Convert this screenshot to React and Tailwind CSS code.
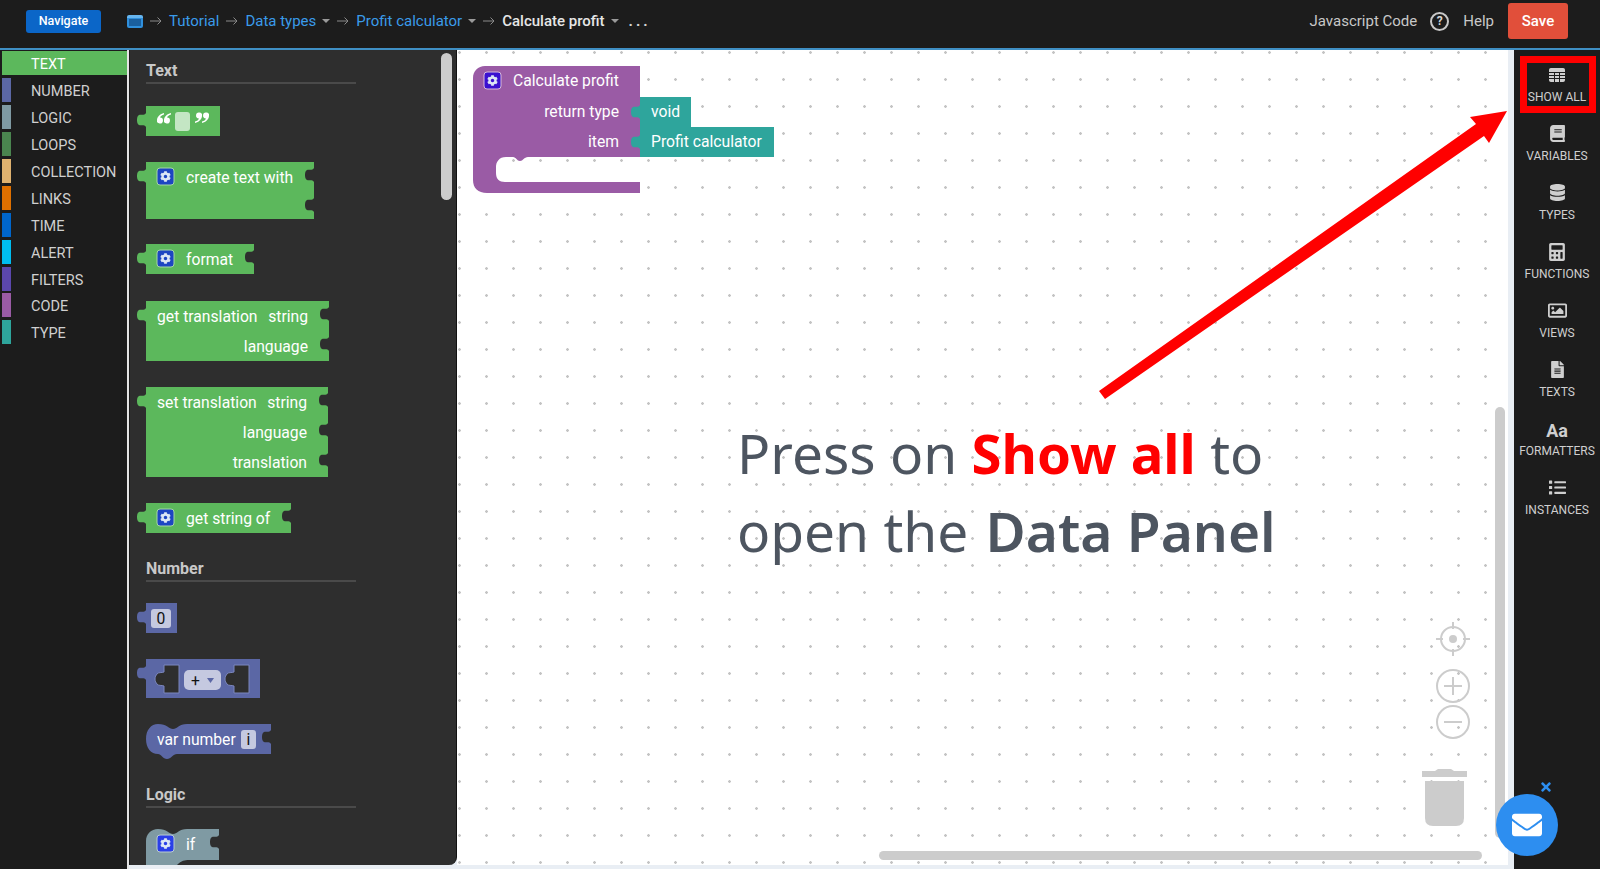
import React from "react";
import {
  FaBook,
  FaCalculator,
  FaCog,
  FaDatabase,
  FaEnvelope,
  FaFileAlt,
  FaList,
  FaRegImage,
  FaTimes,
} from "react-icons/fa";

const categories = [
  { name: "TEXT", color: "#5cb85c" },
  { name: "NUMBER", color: "#5b67a5" },
  { name: "LOGIC", color: "#7f9aa3" },
  { name: "LOOPS", color: "#4a854f" },
  { name: "COLLECTION", color: "#dfb26f" },
  { name: "LINKS", color: "#df7000" },
  { name: "TIME", color: "#0066cc" },
  { name: "ALERT", color: "#00bdf0" },
  { name: "FILTERS", color: "#5b47ad" },
  { name: "CODE", color: "#9a5ba5" },
  { name: "TYPE", color: "#2ea59c" },
];

const TableIcon = () => (
  <svg width="16" height="14" viewBox="0 0 16 14" fill="none" stroke="#cfcfcf">
    <rect x="0.5" y="0.5" width="15" height="13" rx="1" fill="#cfcfcf" />
    <path d="M 0,4.5 H 16 M 0,7.5 H 16 M 0,10.5 H 16 M 5.5,4 V 14 M 10.5,4 V 14" stroke="#1c1c1c" />
  </svg>
);

const tools = [
  { label: "SHOW ALL", icon: <TableIcon /> },
  { label: "VARIABLES", icon: <FaBook size={17} /> },
  { label: "TYPES", icon: <FaDatabase size={17} /> },
  { label: "FUNCTIONS", icon: <FaCalculator size={18} /> },
  { label: "VIEWS", icon: <FaRegImage size={19} /> },
  { label: "TEXTS", icon: <FaFileAlt size={17} /> },
  { label: "FORMATTERS", icon: <span className="relative top-[2px] text-[18px] font-bold leading-none">Aa</span> },
  { label: "INSTANCES", icon: <FaList size={17} /> },
];

// puzzle tab cut into a right edge, going down
const notch = "c -2,3 -5,1 -7,2 c -2,1 -2,4 -2,5 s 0,4 2,5 c 2,1 5,-1 7,2";
// output tab on a left edge, going up
const leftTab = "c -2,-3 -5,-1 -7,-2 c -2,-1 -2,-4 -2,-5 s 0,-4 2,-5 c 2,-1 5,1 7,-2";

function blockPath(w, h, notches = []) {
  let d = `M 9,0 H ${9 + w}`;
  notches.forEach((n) => {
    d += ` V ${n} ${notch}`;
  });
  d += ` V ${h} H 9 V 21 ${leftTab} Z`;
  return d;
}

const Gear = ({ x, y, fill = "#1d45c2", stroke = "#a5d6a5" }) => (
  <g>
    <rect x={x} y={y} width="17" height="17" rx="3" fill={fill} stroke={stroke} strokeWidth="1" />
    <FaCog x={x + 3} y={y + 3} size={11} color="#dce6f5" />
  </g>
);

const Label = ({ x, y, anchor = "start", fill = "#fff", children }) => (
  <text x={x} y={y + 1} textAnchor={anchor} fill={fill} fontFamily="Roboto, sans-serif" fontSize="15.7">
    {children}
  </text>
);

const Block = ({ w, h, notches, color = "#5cb85c", className = "", children }) => (
  <svg width={w + 10} height={h} className={`block shrink-0 ${className}`}>
    <path d={blockPath(w, h, notches)} fill={color} />
    {children}
  </svg>
);

const SectionTitle = ({ className = "", children }) => (
  <div className={`ml-[9px] w-[210px] h-[24px] shrink-0 border-b-2 border-[#4a4a4a] text-[16px] leading-[22px] font-bold text-[#c8c8c8] ${className}`}>
    {children}
  </div>
);

const Flyout = () => (
  <div className="relative w-[328px] shrink-0 h-[815px] flex flex-col pl-[7px] bg-[#2e2e2e] border-l border-[#1c1c1c] border-r border-r-[#111] rounded-br-lg overflow-hidden">
    <SectionTitle className="mt-[10px]">Text</SectionTitle>

    <Block w={74} h={30} className="mt-[22px]">
      <path d="M 27,7 C 23,8 20,11 20,14 a 3,3 0 1 0 3,-2.5 C 23.5,10 25,9 27,8.5 Z M 34,7 C 30,8 27,11 27,14 a 3,3 0 1 0 3,-2.5 C 30.5,10 32,9 34,8.5 Z" fill="#fff" />
      <rect x="38" y="6" width="15" height="19" rx="3" fill="#c4e6c4" />
      <path d="M 58,17 C 62,16 65,13 65,10 a 3,3 0 1 0 -3,2.5 C 61.5,14 60,15 58,15.5 Z M 65,17 C 69,16 72,13 72,10 a 3,3 0 1 0 -3,2.5 C 68.5,14 67,15 65,15.5 Z" fill="#fff" />
    </Block>

    <Block w={168} h={57} notches={[6, 36]} className="mt-[26px]">
      <Gear x={20} y={6} />
      <Label x={49} y={20}>create text with</Label>
    </Block>

    <Block w={108} h={30} notches={[6]} className="mt-[25px]">
      <Gear x={20} y={6} />
      <Label x={49} y={20}>format</Label>
    </Block>

    <Block w={183} h={60} notches={[6, 36]} className="mt-[27px]">
      <Label x={20} y={20}>get translation</Label>
      <Label x={171} y={20} anchor="end">string</Label>
      <Label x={171} y={50} anchor="end">language</Label>
    </Block>

    <Block w={182} h={90} notches={[6, 36, 66]} className="mt-[26px]">
      <Label x={20} y={20}>set translation</Label>
      <Label x={170} y={20} anchor="end">string</Label>
      <Label x={170} y={50} anchor="end">language</Label>
      <Label x={170} y={80} anchor="end">translation</Label>
    </Block>

    <Block w={145} h={30} notches={[6]} className="mt-[26px]">
      <Gear x={20} y={6} />
      <Label x={49} y={20}>get string of</Label>
    </Block>

    <SectionTitle className="mt-[25px]">Number</SectionTitle>

    <Block w={31} h={30} color="#5b67a5" className="mt-[21px]">
      <rect x="14" y="6" width="20" height="19" rx="3" fill="#c5c9e0" />
      <Label x={24} y={20} anchor="middle" fill="#111">0</Label>
    </Block>

    <Block w={114} h={39} color="#5b67a5" className="mt-[26px]">
      <path d="M 27,6 H 42 V 34 H 27 V 27 c -2,-1 -6,0 -7,-2 c -1,-1 -2,-3 -2,-5 s 1,-4 2,-5 c 1,-2 5,-1 7,-2 Z" fill="#2e2e2e" stroke="#7b86bd" strokeWidth="1" />
      <path d="M 97,6 H 112 V 34 H 97 V 27 c -2,-1 -6,0 -7,-2 c -1,-1 -2,-3 -2,-5 s 1,-4 2,-5 c 1,-2 5,-1 7,-2 Z" fill="#2e2e2e" stroke="#7b86bd" strokeWidth="1" />
      <rect x="47" y="11" width="37" height="20" rx="5" fill="#c5c9e0" />
      <Label x={54} y={26} fill="#111">+</Label>
      <path d="M 70,19 h 7 l -3.5,5 Z" fill="#5b67a5" />
    </Block>

    <svg width="140" height="35" className="block shrink-0 mt-[26px]">
      <path d={`M 21,0 C 30,0 32,5 36,5 C 40,5 42,0 50,0 H 134 V 6 ${notch} V 30 H 40 C 36,30 34,35 30,35 C 26,35 24,30 21,30 C 14,30 9,24 9,15 C 9,6 14,0 21,0 Z`} fill="#5b67a5" />
      <Label x={20} y={20}>var number</Label>
      <rect x="104" y="6" width="15" height="19" rx="3" fill="#c5c9e0" />
      <Label x={111.5} y={20} anchor="middle" fill="#111">i</Label>
    </svg>

    <SectionTitle className="mt-[25px]">Logic</SectionTitle>

    <svg width="90" height="60" className="block shrink-0 mt-[21px]">
      <path d={`M 21,0 C 30,0 32,5 36,5 C 40,5 42,0 50,0 H 82 V 6 ${notch} V 60 H 9 V 12 C 9,5 14,0 21,0 Z`} fill="#7f9aa3" />
      <path d="M 40,36 C 46,30 50,31 56,31 H 82 V 36 Z" fill="#2e2e2e" />
      <Gear x={20} y={6} fill="#2a3fe8" stroke="#b9cbd1" />
      <Label x={49} y={20}>if</Label>
    </svg>

    <div className="absolute left-[311px] top-[3px] w-[11px] h-[147px] rounded-full bg-[#cccccc]" />
  </div>
);

const CanvasBlocks = () => (
  <svg width="320" height="135" className="absolute left-[16px] top-[16px]">
    <path d="M 12,0 H 167 V 91 H 55 C 51,91 50,95 47,95 C 44,95 43,91 40,91 H 33 C 26,91 23,96 23,101 V 107 C 23,113 26,116 32,116 H 167 V 127 H 14 C 5,127 0,122 0,114 V 12 C 0,5 5,0 12,0 Z" fill="#9a5ba5" />
    <Gear x={11} y={6} fill="#3a10d0" stroke="#d6b9dc" />
    <Label x={40} y={19}>Calculate profit</Label>
    <Label x={146} y={50} anchor="end">return type</Label>
    <Label x={146} y={80} anchor="end">item</Label>

    <path d="M 167,31 H 218 V 61 H 167 V 53 c -2,-3 -5,-1 -7,-2 c -2,-1 -2,-4 -2,-5 s 0,-4 2,-5 c 2,-1 5,1 7,-2 Z" fill="#2ea59c" />
    <Label x={178} y={50}>void</Label>
    <path d="M 167,61 H 301 V 91 H 167 V 83 c -2,-3 -5,-1 -7,-2 c -2,-1 -2,-4 -2,-5 s 0,-4 2,-5 c 2,-1 5,1 7,-2 Z" fill="#2ea59c" />
    <Label x={178} y={80}>Profit calculator</Label>
  </svg>
);

const Controls = () => (
  <svg width="60" height="215" className="absolute left-[961px] top-[565px]" fill="none" stroke="#cccccc" strokeWidth="2">
    <circle cx="35" cy="24" r="12" />
    <path d="M 35,7 V 14 M 35,34 V 41 M 18,24 H 25 M 45,24 H 52" />
    <circle cx="35" cy="24" r="4" fill="#cccccc" stroke="none" />
    <circle cx="35" cy="71" r="16" />
    <path d="M 35,62 V 80 M 26,71 H 44" />
    <circle cx="35" cy="107" r="16" />
    <path d="M 26,107 H 44" />
    <path d="M 4,162 H 49 V 156 H 36 L 33,154 H 20 L 17,156 H 4 Z" fill="#cccccc" stroke="none" />
    <path d="M 7,166 H 46 V 203 Q 46,211 38,211 H 15 Q 7,211 7,203 Z" fill="#cccccc" stroke="none" />
  </svg>
);

const Sep = () => (
  <svg width="12" height="10" viewBox="0 0 12 10" className="mx-[7px] shrink-0" fill="none" stroke="#8a8a8a" strokeWidth="1">
    <path d="M 0,5 H 11 M 7.5,1.5 L 11,5 L 7.5,8.5" />
  </svg>
);
const Caret = () => <span className="ml-[6px] w-0 h-0 border-x-[4px] border-x-transparent border-t-[4px] border-t-[#9a9a9a]" />;

const Header = () => (
  <header className="h-[50px] shrink-0 flex items-center bg-[#1c1c1c] border-b-2 border-[#3f8fc4] pl-[26px] pr-[32px] pb-[6px] text-[15px] text-[#d6d6d6]">
    <button className="w-[75px] h-[23px] rounded-[3px] bg-[#0b66c8] text-white text-[12.5px] font-medium">Navigate</button>
    <div className="ml-[26px] w-[16px] h-[13px] rounded-[2px] bg-[#2f8fdc] border-t-[3px] border-[#66b5ef] flex items-center justify-center">
      <span className="w-[12px] h-[7px] bg-[#1a5f9e]" />
    </div>
    <Sep />
    <span className="text-[#3a9bea]">Tutorial</span>
    <Sep />
    <span className="text-[#3a9bea]">Data types</span>
    <Caret />
    <Sep />
    <span className="text-[#3a9bea]">Profit calculator</span>
    <Caret />
    <Sep />
    <span className="text-[#e6e6e6] font-medium">Calculate profit</span>
    <Caret />
    <span className="ml-[10px] tracking-[3px] font-bold">...</span>
    <span className="ml-auto text-[#c8c8c8]">Javascript Code</span>
    <span className="ml-[13px] w-[19px] h-[19px] rounded-full border-2 border-[#c8c8c8] flex items-center justify-center text-[12px] font-bold">?</span>
    <span className="ml-[14px] text-[#c8c8c8]">Help</span>
    <button className="ml-[14px] w-[60px] h-[36px] rounded-[3px] bg-[#e14f3a] text-white text-[15px] font-medium">Save</button>
  </header>
);

const Sidebar = () => (
  <aside className="w-[129px] shrink-0 bg-[#1c1c1c] pt-[1px] pl-[2px] border-r-2 border-[#e4e4e4]">
    {categories.map((c, i) => (
      <div key={c.name} className="h-[26.95px] flex items-start">
        <div
          className={`h-[24px] ${i === 0 ? "w-[125px]" : "w-[9px]"}`}
          style={{ backgroundColor: c.color }}
        >
          {i === 0 && <span className="block ml-[29px] h-[24px] leading-[27px] text-[14.5px] text-white">{c.name}</span>}
        </div>
        {i !== 0 && <span className="ml-[20px] h-[24px] leading-[27px] text-[14.5px] text-[#d0d0d0]">{c.name}</span>}
      </div>
    ))}
  </aside>
);

const Toolbar = () => (
  <aside className="relative w-[86px] shrink-0 bg-[#1c1c1c] pt-[14px] flex flex-col items-center">
    <div className="absolute left-[6px] top-[6px] w-[76px] h-[57px] border-[7px] border-[#ff0000]" />
    {tools.map((t) => (
      <div key={t.label} className="relative h-[59px] w-full shrink-0 flex flex-col items-center text-[#cfcfcf]">
        <div className="h-[21px] flex items-center justify-center">{t.icon}</div>
        <div className="mt-[4px] text-[12px] leading-[16px]">{t.label}</div>
      </div>
    ))}
  </aside>
);

export default function App() {
  return (
    <div className="relative w-[1600px] h-[869px] flex flex-col overflow-hidden bg-[#e9eef4] font-['Roboto',sans-serif]">
      <Header />
      <div className="flex flex-1 min-h-0">
        <Sidebar />
        <Flyout />
        <main className="relative flex-1 h-[815px] bg-white bg-[radial-gradient(circle,#c4c4c4_1px,transparent_1.6px)] bg-[length:27px_27px] bg-[position:16px_-11px]">
          <CanvasBlocks />
          <div className="absolute left-[280px] top-[364px] font-['Noto_Sans',sans-serif] text-[55px] leading-[77px] text-[#4d5560] whitespace-nowrap">
            <div>
              Press on <span className="font-bold text-[54.5px] text-[#ff0000]">Show all</span> to
            </div>
            <div>
              open the <span className="ml-[3px] font-semibold">Data Panel</span>
            </div>
          </div>
          <svg width="430" height="310" className="absolute left-[630px] top-[50px]">
            <path d="M 12,291 L 389,24 L 383,17 L 420,11 L 402,43 L 397,36 L 18,299 Z" fill="#ff0000" />
          </svg>
          <Controls />
          <div className="absolute left-[1038px] top-[357px] w-[10px] h-[431px] rounded-full bg-[#cccccc]" />
          <div className="absolute left-[422px] top-[801px] w-[603px] h-[9px] rounded-full bg-[#cccccc]" />
        </main>
        <div className="w-[6px] shrink-0 bg-[#e9eef4]" />
        <Toolbar />
      </div>
      <div className="absolute left-[1496px] top-[794px] w-[62px] h-[62px] rounded-full bg-[#2d8ef0] flex items-center justify-center text-white">
        <FaEnvelope size={30} />
      </div>
      <div className="absolute left-[1539px] top-[780px] text-[#2d8ef0]">
        <FaTimes size={14} />
      </div>
    </div>
  );
}
